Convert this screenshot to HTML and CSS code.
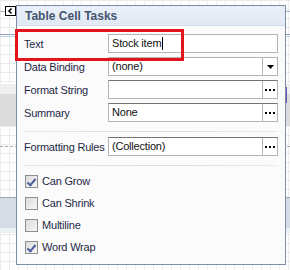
FILE: index.html
```html
<!DOCTYPE html>
<html lang="en">
<head>
    <meta charset="UTF-8">
    <title>Table Cell Tasks</title>
    <link rel="stylesheet" href="styles.css">
</head>
<body>
    <!-- Designer surface behind the smart tag -->
    <div class="canvas">
        <div class="band band-top"></div>
        <div class="line line-thin"></div>
        <div class="band band-a"></div>
        <div class="line line-double"></div>
        <div class="band band-b"></div>
        <div class="band band-light"></div>
        <div class="band band-grey"></div>
        <div class="band band-c"></div>
        <div class="line line-dashed"></div>
        <div class="band band-d"></div>
        <div class="line line-dark"></div>
        <div class="band band-blue"></div>
        <div class="band band-pale"></div>
        <div class="band band-e"></div>

        <div class="mark"></div>

        <!-- Smart tag button -->
        <div class="tag-button">
            <svg width="11" height="10" viewBox="0 0 11 10">
                <rect x="0.5" y="0.5" width="10" height="9" fill="#fff" stroke="#000"/>
                <polyline points="6.5,2.5 4,5 6.5,7.5" fill="none" stroke="#000" stroke-width="1.6"/>
            </svg>
        </div>

        <!-- Tasks panel -->
        <div class="panel">
            <div class="panel-header">Table Cell Tasks</div>
            <div class="panel-body">
                <div class="field-grid">
                    <label>Text</label>
                    <div class="input">
                        <span class="value">Stock item<span class="caret"></span></span>
                    </div>

                    <label>Data Binding</label>
                    <div class="input">
                        <span class="value">(none)</span>
                        <span class="input-btn">
                            <svg width="7" height="4" viewBox="0 0 7 4"><polygon points="0,0 7,0 3.5,4" fill="#000"/></svg>
                        </span>
                    </div>

                    <label>Format String</label>
                    <div class="input dark-top">
                        <span class="value"></span>
                        <span class="input-btn">
                            <svg width="10" height="2" viewBox="0 0 10 2"><rect x="0" width="2" height="2"/><rect x="4" width="2" height="2"/><rect x="8" width="2" height="2"/></svg>
                        </span>
                    </div>

                    <label>Summary</label>
                    <div class="input dark-top">
                        <span class="value">None</span>
                        <span class="input-btn">
                            <svg width="10" height="2" viewBox="0 0 10 2"><rect x="0" width="2" height="2"/><rect x="4" width="2" height="2"/><rect x="8" width="2" height="2"/></svg>
                        </span>
                    </div>
                </div>

                <div class="separator"></div>

                <div class="field-grid">
                    <label>Formatting Rules</label>
                    <div class="input dark-top">
                        <span class="value">(Collection)</span>
                        <span class="input-btn">
                            <svg width="10" height="2" viewBox="0 0 10 2"><rect x="0" width="2" height="2"/><rect x="4" width="2" height="2"/><rect x="8" width="2" height="2"/></svg>
                        </span>
                    </div>
                </div>

                <div class="separator"></div>

                <div class="checks">
                    <div class="check-row"><span class="box checked"></span>Can Grow</div>
                    <div class="check-row"><span class="box"></span>Can Shrink</div>
                    <div class="check-row"><span class="box"></span>Multiline</div>
                    <div class="check-row"><span class="box checked"></span>Word Wrap</div>
                </div>
            </div>
        </div>

        <!-- Highlight around the Text row -->
        <div class="highlight"></div>
    </div>
</body>
</html>
```

FILE: styles.css
```css
/* Basic reset */
* {
    margin: 0;
    padding: 0;
    box-sizing: border-box;
}

body {
    font-family: "Liberation Sans", Arial, sans-serif;
    font-size: 11px;
    letter-spacing: -0.2px;
    background-color: #fff;
}

/* Designer surface */
.canvas {
    position: relative;
    width: 290px;
    height: 270px;
    overflow: hidden;
    display: flex;
    flex-direction: column;
    background-color: #fff;
    background-image:
        linear-gradient(to right, #ececec 1px, transparent 1px),
        linear-gradient(to bottom, #ececec 1px, transparent 1px);
    background-size: 9px 9px;
}

.band-top { height: 11px; }
.band-a { height: 22px; }
.band-b { height: 47px; }
.band-light { height: 10px; background-color: #efefef; }
.band-grey { height: 32px; background-color: #dcdcdc; }
.band-c { height: 20px; }
.band-d { height: 50px; }
.band-blue { height: 30px; background-color: #d6dce5; }
.band-pale { height: 5px; background-color: #eceff3; }
.band-e { flex: 1; }

.line-thin {
    height: 1px;
    background-color: #a9b6c6;
}

.line-double {
    height: 3px;
    border-top: 1px solid #8fa3bf;
    border-bottom: 1px solid #c3cfdf;
}

.line-dashed {
    height: 1px;
    border-top: 1px dashed #a8a8a8;
}

.line-dark {
    height: 1px;
    background-color: #a4a9b0;
}

.mark {
    position: absolute;
    left: 286px;
    top: 87px;
    width: 1px;
    height: 16px;
    background-color: #6a58b0;
}

/* Smart tag button */
.tag-button {
    position: absolute;
    left: 5px;
    top: 6px;
    line-height: 0;
}

/* Tasks panel */
.panel {
    position: absolute;
    left: 16px;
    top: 5px;
    width: 270px;
    height: 260px;
    background-color: #fbfbfb;
    border: 1px solid #7d8ea6;
    color: #1e2846;
}

.panel-header {
    height: 20px;
    line-height: 21px;
    padding-left: 8px;
    font-weight: bold;
    font-size: 12px;
    letter-spacing: 0;
    color: #45556f;
    background: linear-gradient(#e9f0f9, #e1e9f4);
    border-bottom: 1px solid #d5dfeb;
}

.panel-body {
    padding: 8px 7px 0 7px;
}

.field-grid {
    display: grid;
    grid-template-columns: 84px 1fr;
    grid-auto-rows: 19px;
    row-gap: 4px;
    align-items: center;
}

.field-grid label {
    white-space: nowrap;
}

.input {
    height: 19px;
    display: flex;
    background-color: #fff;
    border: 1px solid #b4b4b4;
    color: #111;
}

.input.dark-top {
    border-top-color: #747474;
}

.input .value {
    flex: 1;
    padding-left: 3px;
    line-height: 17px;
    display: flex;
    align-items: center;
}

.caret {
    display: inline-block;
    width: 1px;
    height: 13px;
    margin-left: 1px;
    background-color: #000;
}

.input-btn {
    width: 15px;
    border-left: 1px solid #b4b4b4;
    display: flex;
    align-items: center;
    justify-content: center;
}

/* Separator lines */
.separator {
    height: 1px;
    margin: 9px 0 5px 0;
    background: linear-gradient(to right, #e6e6e6, #dcdcdc 60%, #ececec);
}

.separator + .checks {
    margin-top: -1px;
}

/* Check boxes */
.checks {
    display: flex;
    flex-direction: column;
}

.check-row {
    height: 22px;
    display: flex;
    align-items: center;
    gap: 4px;
    padding-left: 1px;
}

.box {
    width: 13px;
    height: 13px;
    border: 1px solid #8e8f8f;
    background: linear-gradient(135deg, #dcdcdc, #f6f6f6);
    position: relative;
}

.box.checked::after {
    content: "";
    position: absolute;
    left: 3px;
    top: 1px;
    width: 3px;
    height: 7px;
    border-right: 2px solid #4b5e9c;
    border-bottom: 2px solid #4b5e9c;
    transform: rotate(40deg);
}

/* Red highlight box */
.highlight {
    position: absolute;
    left: 15px;
    top: 29px;
    width: 169px;
    height: 32px;
    border: 3px solid #e3141b;
}
```
